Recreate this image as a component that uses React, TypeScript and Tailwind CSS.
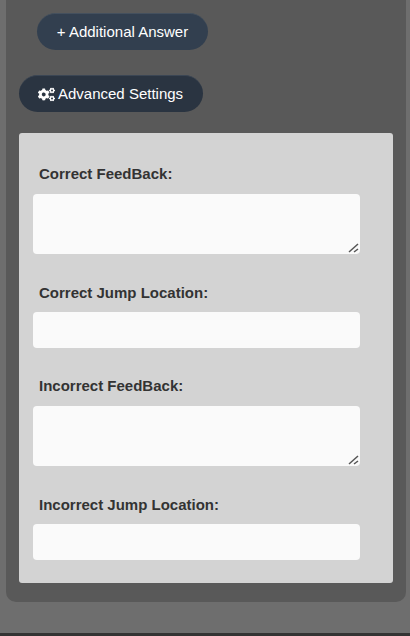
import { FaCogs } from "react-icons/fa";

function Label({ children }: { children: string }) {
  return <label className="block pl-[6px] text-[15px] leading-[20px] font-bold text-[#333333]">{children}</label>;
}

function Area() {
  return (
    <div className="relative mt-[10px] h-[60px] w-[327px]">
      <textarea className="block h-full w-full resize-none rounded-[4px] bg-[#fafafa] outline-none" />
      <svg className="absolute right-0 bottom-0 h-[14px] w-[14px]" viewBox="0 0 14 14" fill="none" stroke="#555555" strokeWidth="1.5">
        <path d="M3 12 L12 4" />
        <path d="M8 12 L12 9" />
      </svg>
    </div>
  );
}

export default function App() {
  return (
    <div className="h-[636px] w-[410px] overflow-hidden bg-[#6e6e6e] flex flex-col font-['Liberation_Sans',Arial,sans-serif]">
      <div className="flex-1">
        <div className="ml-[6px] mr-[4px] h-[602px] rounded-b-[10px] bg-[#595959] pt-[13px] px-[13px]">
          <button className="ml-[18px] block h-[37px] w-[171px] rounded-[18.5px] border-t border-[#44505e] bg-[#323f4f] text-center text-[15px] text-white">
            + Additional Answer
          </button>
          <button className="mt-[25px] flex h-[37px] w-[184px] items-center gap-[3px] rounded-[18.5px] border-t border-[#3b4654] bg-[#2a3441] pl-[19px] text-[15px] text-white">
            <FaCogs className="h-[17px] w-[17px]" />
            Advanced Settings
          </button>
          <div className="mt-[21px] h-[450px] rounded-[3px] bg-[#d3d3d3] pl-[14px] pt-[31px]">
            <Label>Correct FeedBack:</Label>
            <Area />
            <div className="mt-[29px]"><Label>Correct Jump Location:</Label></div>
            <input className="mt-[9px] block h-[36px] w-[327px] rounded-[4px] bg-[#fafafa] outline-none" />
            <div className="mt-[28px]"><Label>Incorrect FeedBack:</Label></div>
            <Area />
            <div className="mt-[29px]"><Label>Incorrect Jump Location:</Label></div>
            <input className="mt-[9px] block h-[36px] w-[327px] rounded-[4px] bg-[#fafafa] outline-none" />
          </div>
        </div>
      </div>
      <div className="h-[3px] bg-[#333333]" />
    </div>
  );
}
